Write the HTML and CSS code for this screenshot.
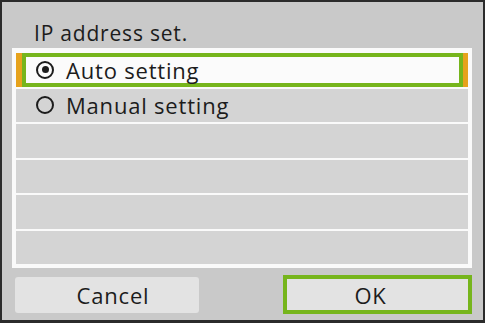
FILE: index.html
```html
<!DOCTYPE html>
<html lang="en">
<head>
    <meta charset="UTF-8">
    <meta name="viewport" content="width=device-width, initial-scale=1.0">
    <title>IP address set</title>
    <link rel="stylesheet" href="styles.css">
</head>
<body>
    <div class="screen">
        <h1 class="title">IP address set.</h1>

        <div class="list">
            <div class="row selected">
                <div class="focus">
                    <span class="radio checked"></span>
                    <span class="label">Auto setting</span>
                </div>
            </div>
            <div class="row">
                <span class="radio"></span>
                <span class="label">Manual setting</span>
            </div>
            <div class="row"></div>
            <div class="row"></div>
            <div class="row"></div>
            <div class="row"></div>
        </div>

        <div class="buttons">
            <button class="btn cancel">Cancel</button>
            <button class="btn active">OK</button>
        </div>
    </div>
</body>
</html>
```

FILE: styles.css
```css
* {
    margin: 0;
    padding: 0;
    box-sizing: border-box;
}

body {
    font-family: 'Open Sans', 'Noto Sans', sans-serif;
    background: #c9c9c9;
    color: #1c1c1c;
}

.screen {
    width: 485px;
    height: 323px;
    background: #c9c9c9;
    border: 2px solid #2b2b2b;
    border-bottom-width: 3px;
    padding: 19px 11px 0 10px;
    display: flex;
    flex-direction: column;
}

.title {
    font-size: 21px;
    font-weight: normal;
    letter-spacing: 0.8px;
    line-height: 24px;
    padding-left: 22px;
    margin-bottom: 3px;
}

.list {
    background: #fafafa;
    border: 4px solid #fafafa;
    border-top-width: 5px;
    height: 220px;
    display: grid;
    grid-template-rows: repeat(6, 1fr);
    row-gap: 2px;
}

.row {
    background: #d4d4d4;
    display: flex;
    align-items: center;
    padding-left: 20px;
    font-size: 22px;
    letter-spacing: 0.8px;
}

.row.selected {
    background: #e6a21c;
    padding: 0 5px 0 6px;
    align-items: stretch;
}

.focus {
    flex: 1;
    background: #fbfbfb;
    border: 4px solid #76b51c;
    display: flex;
    align-items: center;
    padding-left: 10px;
}

.radio {
    width: 18px;
    height: 18px;
    border: 2.5px solid #1c1c1c;
    border-radius: 50%;
    margin-right: 12px;
    display: flex;
    align-items: center;
    justify-content: center;
}

.radio.checked::after {
    content: "";
    width: 7px;
    height: 7px;
    border-radius: 50%;
    background: #1c1c1c;
}

.label {
    line-height: 24px;
}

.buttons {
    display: flex;
    justify-content: space-between;
    align-items: center;
    margin-top: 7px;
    padding-left: 3px;
}

.btn {
    font-family: inherit;
    font-size: 22px;
    letter-spacing: 0.8px;
    color: #1c1c1c;
    width: 184px;
    height: 36px;
    background: #e3e3e3;
    border: none;
    border-radius: 3px;
}

.btn.cancel {
    padding-left: 12px;
}

.btn.active {
    width: 189px;
    height: 39px;
    border: 4px solid #76b51c;
    border-radius: 0;
    padding-right: 14px;
}
```
